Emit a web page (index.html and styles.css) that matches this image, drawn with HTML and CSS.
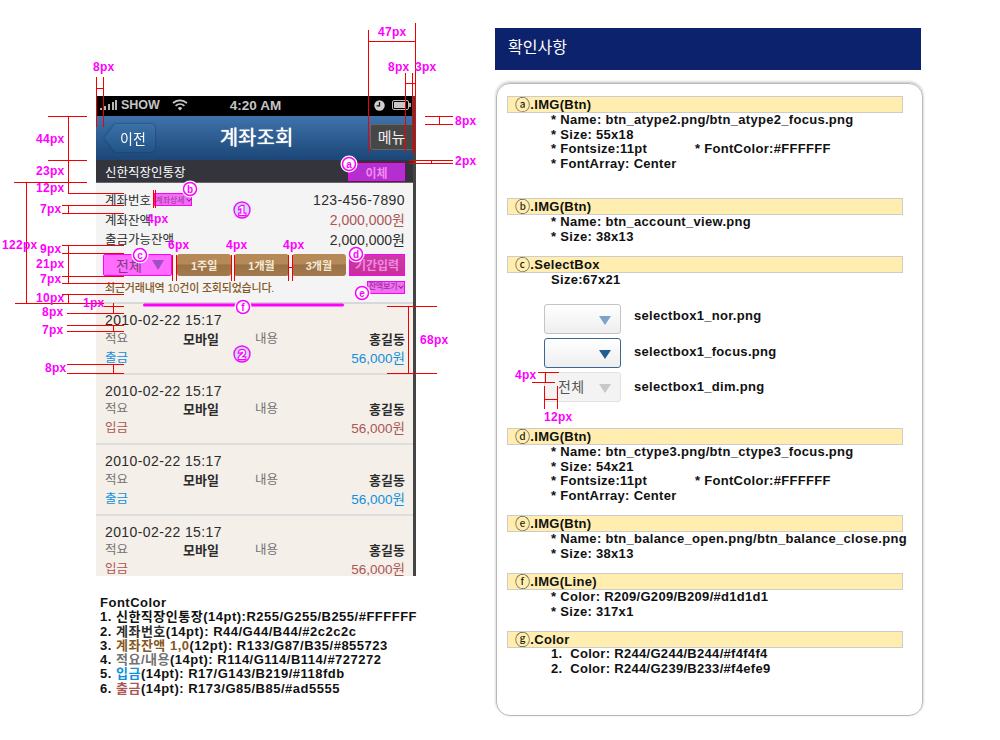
FILE: index.html
```html
<!DOCTYPE html><html lang="ko">
<head>
  <meta charset="UTF-8" />
  <title>계좌조회 화면설계</title>
  <link rel="stylesheet" href="styles.css">
</head>
<body>
<div class="sheet">
  <div class="left">
    <div class="phone">
      <div class="status">
        <div class="status-left">
          <svg width="17" height="10" viewBox="0 0 17 10"><path fill="#b5b5b5" d="M0 8h2v2H0zM4 6h2v4H4zM8 4h2v6H8zM12 2h2v8h-2zM15 0h2v10h-2z"/></svg>
          <span>SHOW</span>
          <svg width="16" height="12" viewBox="0 0 16 12"><path fill="none" stroke="#c8c8c8" stroke-width="1.7" d="M1 4.2a10 10 0 0 1 14 0M3.6 6.8a6.3 6.3 0 0 1 8.8 0"/><path fill="#c8c8c8" d="M8 11.6 5.8 9.2a3 3 0 0 1 4.4 0z"/></svg>
        </div>
        <span class="clock">4:20 AM</span>
        <div class="status-right">
          <svg width="11" height="11" viewBox="0 0 11 11"><circle cx="5.5" cy="5.5" r="5.2" fill="#d0d0d0"/><path fill="none" stroke="#111" stroke-width="1.3" d="M5.5 2v3.8H2.6"/></svg>
          <svg width="19" height="10" viewBox="0 0 19 10"><rect x=".5" y=".5" width="16" height="9" rx="1.5" fill="none" stroke="#bbb"/><rect x="2" y="2" width="11" height="6" fill="#c8c8c8"/><rect x="17" y="3" width="2" height="4" fill="#aaa"/></svg>
        </div>
      </div>
      <div class="nav">
        <div class="btn-back"><div class="btn-back-face">이전</div></div>
        <div class="nav-title">계좌조회</div>
        <div class="btn-menu">메뉴</div>
      </div>
      <div class="acct-bar">
        <span>신한직장인통장</span>
        <div class="btn-transfer">이체</div>
      </div>
      <div class="summary">
        <div class="row">
          <div class="row-label"><span class="ko">계좌번호</span> <span class="btn-view">계좌상세<i class="chev"></i></span></div>
          <div class="num-val">123-456-7890</div>
        </div>
        <div class="row"><div class="ko">계좌잔액</div><div class="red">2,000,000원</div></div>
        <div class="row"><div class="ko">출금가능잔액</div><div>2,000,000원</div></div>
        <div class="controls">
          <div class="select-on">전체<i class="tri"></i></div>
          <div class="period">1주일</div>
          <div class="period">1개월</div>
          <div class="period">3개월</div>
          <div class="period-input">기간입력</div>
        </div>
        <div class="recent">
          <span>최근거래내역 10건이 조회되었습니다.</span>
          <span class="btn-balance">잔액보기<i class="chev"></i></span>
        </div>
      </div>
      <div class="tx">
        <div class="tx-date">2010-02-22 15:17</div>
        <div class="tx-row"><span class="gray">적요</span><span class="strong">모바일</span><span class="gray">내용</span><span class="strong">홍길동</span></div>
        <div class="tx-last blue"><span class="ko">출금</span><span>56,000원</span></div>
      </div>
      <div class="tx">
        <div class="tx-date">2010-02-22 15:17</div>
        <div class="tx-row"><span class="gray">적요</span><span class="strong">모바일</span><span class="gray">내용</span><span class="strong">홍길동</span></div>
        <div class="tx-last red"><span class="ko">입금</span><span>56,000원</span></div>
      </div>
      <div class="tx">
        <div class="tx-date">2010-02-22 15:17</div>
        <div class="tx-row"><span class="gray">적요</span><span class="strong">모바일</span><span class="gray">내용</span><span class="strong">홍길동</span></div>
        <div class="tx-last blue"><span class="ko">출금</span><span>56,000원</span></div>
      </div>
      <div class="tx">
        <div class="tx-date">2010-02-22 15:17</div>
        <div class="tx-row"><span class="gray">적요</span><span class="strong">모바일</span><span class="gray">내용</span><span class="strong">홍길동</span></div>
        <div class="tx-last red"><span class="ko">입금</span><span>56,000원</span></div>
      </div>
    </div>
    <div class="notes">
      <div>FontColor</div>
      <div>1. 신한직장인통장(14pt):R255/G255/B255/#FFFFFF</div>
      <div>2. <span class="c-dark">계좌번호</span>(14pt): R44/G44/B44/#2c2c2c</div>
      <div>3. <span class="c-brown">계좌잔액 1,0</span>(12pt): R133/G87/B35/#855723</div>
      <div>4. <span class="c-gray">적요/내용</span>(14pt): R114/G114/B114/#727272</div>
      <div>5. <span class="c-blue">입금</span>(14pt): R17/G143/B219/#118fdb</div>
      <div>6. <span class="c-red">출금</span>(14pt): R173/G85/B85/#ad5555</div>
    </div>
  </div>

  <div class="right">
    <h2 class="head">확인사항</h2>
    <div class="panel">
      <div class="sec sec-a">
        <div class="bar"><span class="mk">ⓐ</span>.IMG(Btn)</div>
        <ul class="spec">
          <li>* Name: btn_atype2.png/btn_atype2_focus.png</li>
          <li>* Size: 55x18</li>
          <li class="two"><span>* Fontsize:11pt</span><span>* FontColor:#FFFFFF</span></li>
          <li>* FontArray: Center</li>
        </ul>
      </div>
      <div class="sec">
        <div class="bar"><span class="mk">ⓑ</span>.IMG(Btn)</div>
        <ul class="spec">
          <li>* Name: btn_account_view.png</li>
          <li>* Size: 38x13</li>
        </ul>
      </div>
      <div class="sec sec-c">
        <div class="bar"><span class="mk">ⓒ</span>.SelectBox</div>
        <ul class="spec">
          <li>Size:67x21</li>
        </ul>
        <div class="boxes">
          <div class="box-row"><div class="box box-nor"><i class="tri"></i></div><span>selectbox1_nor.png</span></div>
          <div class="box-row"><div class="box box-focus"><i class="tri"></i></div><span>selectbox1_focus.png</span></div>
          <div class="box-row"><div class="box box-dim">전체<i class="tri"></i></div><span>selectbox1_dim.png</span></div>
        </div>
      </div>
      <div class="sec">
        <div class="bar"><span class="mk">ⓓ</span>.IMG(Btn)</div>
        <ul class="spec">
          <li>* Name: btn_ctype3.png/btn_ctype3_focus.png</li>
          <li>* Size: 54x21</li>
          <li class="two"><span>* Fontsize:11pt</span><span>* FontColor:#FFFFFF</span></li>
          <li>* FontArray: Center</li>
        </ul>
      </div>
      <div class="sec">
        <div class="bar"><span class="mk">ⓔ</span>.IMG(Btn)</div>
        <ul class="spec">
          <li>* Name: btn_balance_open.png/btn_balance_close.png</li>
          <li>* Size: 38x13</li>
        </ul>
      </div>
      <div class="sec">
        <div class="bar"><span class="mk">ⓕ</span>.IMG(Line)</div>
        <ul class="spec">
          <li>* Color: R209/G209/B209/#d1d1d1</li>
          <li>* Size: 317x1</li>
        </ul>
      </div>
      <div class="sec">
        <div class="bar"><span class="mk">ⓖ</span>.Color</div>
        <ul class="spec spec-last">
          <li>1.&nbsp;&nbsp;Color: R244/G244/B244/#f4f4f4</li>
          <li>2.&nbsp;&nbsp;Color: R244/G239/B233/#f4efe9</li>
        </ul>
      </div>
    </div>
  </div>

  <!-- dimension lines and callouts drawn over the screen -->
  <svg class="marks" width="1000" height="740" viewBox="0 0 1000 740">
    <path class="ln" d="M96.5 77V127M103.5 77V127M96 88.5H103
      M48 116.5H87M48 160.5H87M14 182.5H87M68.5 116V193M68 193.5H124
      M62 205.5H124M62 213.5H124M68.5 205V213
      M62 245.5H124M62 253.5H124M62 276.5H124M62 283.5H124M68.5 245V283
      M62 294.5H124M68.5 295V303M15 303.5H104M26.5 182V303
      M104 306.5H124M67 313.5H124M113.5 303V313
      M67 325.5H124M67 331.5H124M113.5 325V331
      M67 364.5H124M67 373.5H124M113.5 364V373
      M153.5 190V208M155.5 190V208
      M172.5 255V281M176.5 255V281M231.5 255V281M234.5 255V281
      M288.5 255V281M292.5 255V281M288 267.5H292
      M368.5 30V153M415.5 23V153M368 41.5H415
      M405.5 73V153M412.5 73V153M405 83.5H415
      M425 116.5H453M425 124.5H453M439.5 116V124
      M409 160.5H453M409 163.5H453M431.5 160V163
      M387 306.5H437M387 373.5H437M408.5 306V373
      M538 372.5H559M532 382.5H555M545.5 372V382
      M544.5 386V409M557.5 386V409M544 399.5H557"/>
    <rect class="fline" x="143" y="303.5" width="201" height="3" rx="1.5"/>

    <text class="px" x="93" y="71">8px</text>
    <text class="px" x="36" y="143">44px</text>
    <text class="px" x="36" y="175">23px</text>
    <text class="px" x="36" y="192">12px</text>
    <text class="px" x="40" y="213">7px</text>
    <text class="px" x="147" y="223">4px</text>
    <text class="px" x="2" y="249">122px</text>
    <text class="px" x="40" y="253">9px</text>
    <text class="px" x="36" y="268">21px</text>
    <text class="px" x="40" y="283">7px</text>
    <text class="px" x="36" y="302">10px</text>
    <text class="px" x="83" y="307">1px</text>
    <text class="px" x="42" y="316">8px</text>
    <text class="px" x="42" y="334">7px</text>
    <text class="px" x="45" y="372">8px</text>
    <text class="px" x="168" y="249">6px</text>
    <text class="px" x="226" y="249">4px</text>
    <text class="px" x="283" y="249">4px</text>
    <text class="px" x="378" y="36">47px</text>
    <text class="px" x="388" y="71">8px</text>
    <text class="px" x="415" y="71">3px</text>
    <text class="px" x="455" y="125">8px</text>
    <text class="px" x="455" y="165">2px</text>
    <text class="px" x="420" y="344">68px</text>
    <text class="px" x="515" y="379">4px</text>
    <text class="px" x="544" y="421">12px</text>

    <g class="tag"><circle class="halo" cx="349" cy="164" r="8.5"/><circle class="ring" cx="349" cy="164" r="6.5"/><text x="349" y="167.5">a</text></g>
    <g class="tag"><circle class="halo" cx="190" cy="189" r="8.5"/><circle class="ring" cx="190" cy="189" r="6.5"/><text x="190" y="192.5">b</text></g>
    <g class="tag"><circle class="halo" cx="140" cy="255" r="8.5"/><circle class="ring" cx="140" cy="255" r="6.5"/><text x="140" y="258.5">c</text></g>
    <g class="tag"><circle class="halo" cx="356" cy="254" r="8.5"/><circle class="ring" cx="356" cy="254" r="6.5"/><text x="356" y="257.5">d</text></g>
    <g class="tag"><circle class="halo" cx="362" cy="293" r="8.5"/><circle class="ring" cx="362" cy="293" r="6.5"/><text x="362" y="296.5">e</text></g>
    <g class="tag"><circle class="halo" cx="243" cy="307" r="8.5"/><circle class="ring" cx="243" cy="307" r="6.5"/><text x="243" y="310.5">f</text></g>
    <g class="num"><circle cx="242" cy="210" r="8"/><text x="242" y="214.5">1</text></g>
    <g class="num"><circle cx="242" cy="354" r="8"/><text x="242" y="358.5">2</text></g>
  </svg>
</div>
</body>
</html>
```

FILE: styles.css
```css
* {
  box-sizing: border-box;
}
body {
  margin: 0;
  background: #fff;
  font-family: "Liberation Sans", "Noto Sans CJK KR", sans-serif;
}
.sheet {
  position: relative;
  width: 1000px;
  height: 740px;
  display: flex;
  overflow: hidden;
}
.left {
  width: 320px;
  margin: 96px 0 0 96px;
}
.right {
  width: 428px;
  margin: 28px 0 0 79px;
}

/* phone */
.phone {
  width: 320px;
  height: 480px;
  overflow: hidden;
  border-right: 3px solid #444;
  color: #2c2c2c;
  font-size: 14px;
}
.status {
  height: 20px;
  background: #000;
  color: #c4c4c4;
  font-size: 12.5px;
  font-weight: bold;
  display: grid;
  grid-template-columns: 1fr auto 1fr;
  align-items: center;
  padding: 0 2px 2px 4px;
}
.status-left {
  display: flex;
  align-items: center;
  gap: 4px;
}
.status-left svg:last-child {
  margin-left: 8px;
}
.clock {
  font-size: 13.5px;
}
.status-right {
  display: flex;
  align-items: center;
  justify-content: flex-end;
  gap: 7px;
}
.nav {
  height: 44px;
  background: linear-gradient(#3f73ab, #1b4677);
  display: flex;
  align-items: center;
  justify-content: space-between;
  padding: 0 0 0 8px;
}
.btn-back {
  filter: drop-shadow(0 0 1px #123a68);
}
.btn-back-face {
  width: 51px;
  height: 28px;
  padding-left: 7px;
  display: flex;
  align-items: center;
  justify-content: center;
  background: linear-gradient(#3b70a8, #225488);
  color: #fff;
  font-size: 14px;
  clip-path: path("M0 14 L11 0 H47 Q51 0 51 4 V24 Q51 28 47 28 H11 Z");
}
.nav-title {
  color: #fff;
  font-size: 20px;
  margin: -3px 0 0 -12px;
  text-shadow: 0 0 1px #fff;
}
.btn-menu {
  width: 43px;
  height: 26px;
  margin-top: -3px;
  border: 1px solid #666;
  border-radius: 3px 0 0 3px;
  background: #474747;
  color: #eee;
  font-size: 15px;
  display: flex;
  align-items: center;
  justify-content: center;
}
.acct-bar {
  height: 23px;
  background: #33343c;
  color: #fff;
  font-size: 12.5px;
  display: flex;
  align-items: center;
  justify-content: space-between;
  padding: 0 8px 0 9px;
  border-bottom: 1px solid #666;
}
.btn-transfer {
  width: 57px;
  height: 18px;
  margin-top: 2px;
  background: #b52fd0;
  border: 1px solid #f0f;
  color: #f08af0;
  font-size: 12px;
  font-weight: bold;
  display: flex;
  align-items: center;
  justify-content: center;
}
.summary {
  height: 121px;
  background: #f4f4f4;
  border-bottom: 2px solid #d8d8d8;
  padding: 7px 8px 0 9px;
}
.row {
  height: 19.5px;
  display: flex;
  align-items: center;
  justify-content: space-between;
}
.row-label {
  display: flex;
  align-items: center;
  gap: 3px;
}
.ko {
  font-size: 12.5px;
}
.num-val {
  letter-spacing: 0.4px;
}
.red {
  color: #ad5555;
}
.blue {
  color: #118fdb;
}
.chev {
  width: 4px;
  height: 4px;
  margin: -2px 0 0 2px;
  border-right: 1px solid #a020a0;
  border-bottom: 1px solid #a020a0;
  transform: rotate(45deg);
}
.btn-view, .btn-balance {
  width: 38px;
  height: 13px;
  background: #f070f0;
  border: 1px solid #f0f;
  color: #a030a0;
  font-size: 8px;
  display: flex;
  align-items: center;
  justify-content: center;
  white-space: nowrap;
}
.controls {
  display: flex;
  margin: 5px 0 0 -2px;
  height: 22px;
  gap: 3px;
}
.select-on {
  width: 69px;
  margin-right: 2px;
  background: #ff6cff;
  border: 1px solid #f0f;
  border-radius: 2px;
  color: #7a3d7a;
  font-size: 14px;
  display: flex;
  align-items: center;
  padding-left: 12px;
}
.tri {
  margin-left: 10px;
  border-left: 6px solid transparent;
  border-right: 6px solid transparent;
  border-top: 10px solid #a050c0;
}
.period {
  width: 54.5px;
  background: linear-gradient(#b58a58 0, #b58a58 45%, #9b7146 50%, #a27a4e 100%);
  border-radius: 3px;
  color: #f4ead8;
  font-size: 11px;
  font-weight: bold;
  display: flex;
  align-items: center;
  justify-content: center;
}
.period-input {
  width: 56px;
  background: linear-gradient(#cc3aa8, #c82f98);
  border: 1px solid #f0f;
  color: #f08ae0;
  font-size: 12px;
  font-weight: bold;
  display: flex;
  align-items: center;
  justify-content: center;
}
.recent {
  display: flex;
  justify-content: space-between;
  align-items: flex-start;
  margin-top: 5px;
  color: #855723;
  font-size: 11px;
  font-weight: 500;
  letter-spacing: -0.2px;
  line-height: 14px;
}
.tx {
  height: 70.5px;
  background: #f4efe9;
  border-bottom: 2px solid #ddd;
  padding: 7px 8px 0 9px;
}
.tx-date {
  height: 18.5px;
  line-height: 18px;
  letter-spacing: 0.4px;
}
.tx-row {
  display: grid;
  grid-template-columns: 78px 72px 1fr auto;
  height: 19px;
  line-height: 19px;
  font-size: 12.5px;
}
.tx-last {
  display: flex;
  justify-content: space-between;
  height: 19px;
  line-height: 19px;
  font-size: 13.5px;
}
.gray {
  color: #727272;
}
.strong {
  font-size: 13px;
  font-weight: bold;
}

/* notes under the phone */
.notes {
  margin: 20px 0 0 4px;
  white-space: nowrap;
  font-size: 13px;
  font-weight: bold;
  letter-spacing: 0.5px;
  line-height: 14.3px;
  color: #111;
}
.c-dark {
  color: #2c2c2c;
}
.c-brown {
  color: #855723;
}
.c-gray {
  color: #727272;
}
.c-blue {
  color: #118fdb;
}
.c-red {
  color: #ad5555;
}

/* right column */
.head {
  margin: 0;
  height: 42px;
  width: 426px;
  background: #0d226d;
  color: #fff;
  font-size: 16px;
  font-weight: normal;
  line-height: 40px;
  padding-left: 13px;
}
.panel {
  height: 633px;
  margin: 13px 0 0 1px;
  padding: 12px 0 0 10px;
  border: 1px solid #b8b8b8;
  border-radius: 14px;
  box-shadow: 0 -1px 3px #bbb;
  color: #111;
  font-size: 13px;
  font-weight: bold;
  letter-spacing: 0.3px;
  line-height: 14.5px;
  white-space: nowrap;
}
.sec {
  margin-bottom: 12px;
}
.sec-a {
  margin-bottom: 27px;
}
.sec-c {
  margin-bottom: 26px;
}
.bar {
  width: 396px;
  height: 17px;
  background: #ffeeb0;
  border: 1px solid #ccc;
  padding-left: 7px;
  line-height: 16px;
  display: flex;
  align-items: center;
}
.mk {
  font-size: 15px;
  font-weight: normal;
}
.spec {
  list-style: none;
  margin: 0;
  padding: 0 0 0 44px;
}
.spec-last {
  margin-top: -1px;
}
.two {
  display: flex;
}
.two span:first-child {
  width: 144px;
}
.boxes {
  margin: 16.5px 0 0 37px;
  display: flex;
  flex-direction: column;
  gap: 4px;
}
.box-row {
  display: flex;
  align-items: center;
  gap: 13px;
}
.box-row span {
  margin-top: -5px;
}
.box-row:nth-child(2) span {
  margin-top: -1px;
}
.box-row:nth-child(3) span {
  margin-top: 1px;
}
.box {
  width: 77px;
  height: 30px;
  border: 1px solid #c4c4c4;
  border-radius: 3px;
  background: linear-gradient(#fff, #eee);
  display: flex;
  align-items: center;
  justify-content: flex-end;
  padding-right: 9px;
  font-weight: normal;
}
.box .tri {
  margin: 2px 0 0;
  border-left-width: 6px;
  border-right-width: 6px;
  border-top-width: 9px;
}
.box-nor .tri {
  border-top-color: #7da4c8;
}
.box-focus {
  border-color: #3b6796;
}
.box-focus .tri {
  border-top-color: #265a92;
}
.box-dim {
  background: #f3f3f3;
  border-color: #e2e2e2;
  color: #555;
  font-size: 14px;
  justify-content: flex-start;
  padding-left: 13px;
}
.box-dim .tri {
  margin-left: auto;
  border-top-color: #c8c8c8;
}

/* drawn over the page: dimension lines and callouts */
.marks {
  position: absolute;
  left: 0;
  top: 0;
}
.ln {
  fill: none;
  stroke: #f00000;
  stroke-width: 1;
}
.fline {
  fill: #f0f;
}
.px {
  fill: #f0f;
  font-size: 12px;
  font-weight: bold;
  letter-spacing: 0.3px;
}
.tag .halo {
  fill: #fff;
}
.tag .ring {
  fill: #fff;
  stroke: #f0f;
  stroke-width: 1.5;
}
.tag text {
  fill: #f0f;
  font-size: 10px;
  font-weight: bold;
  text-anchor: middle;
}
.num circle {
  fill: #c4e2fb;
  stroke: #f0f;
  stroke-width: 1.4;
}
.num text {
  fill: #fff;
  stroke: #f0f;
  stroke-width: 2.4;
  paint-order: stroke;
  font-size: 13px;
  font-weight: bold;
  text-anchor: middle;
}
```
